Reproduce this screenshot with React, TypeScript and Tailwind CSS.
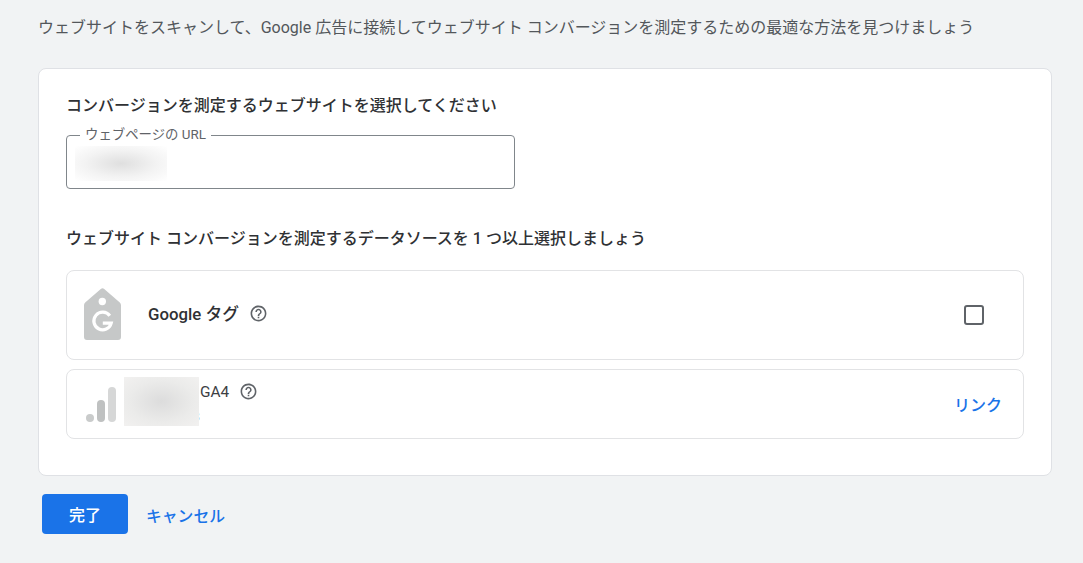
const FONT = "font-['Roboto','Noto_Sans_CJK_JP',sans-serif]";

function HelpIcon() {
  return (
    <svg className="w-[19px] h-[19px] text-[#5f6368]" viewBox="0 0 24 24" fill="currentColor">
      <path d="M11 18h2v-2h-2v2zm1-16C6.48 2 2 6.48 2 12s4.48 10 10 10 10-4.48 10-10S17.52 2 12 2zm0 18c-4.41 0-8-3.59-8-8s3.59-8 8-8 8 3.59 8 8-3.59 8-8 8zm0-14c-2.21 0-4 1.79-4 4h2c0-1.1.9-2 2-2s2 .9 2 2c0 2-3 1.75-3 5h2c0-2.25 3-2.5 3-5 0-2.21-1.79-4-4-4z" />
    </svg>
  );
}

function TagIcon() {
  return (
    <svg className="w-[37px] h-[52px]" viewBox="0 0 37 52">
      <path d="M16.8 1 a2.4 2.4 0 0 1 3.4 0 L35.8 14.6 a3.5 3.5 0 0 1 1.2 2.6 V49 a3 3 0 0 1 -3 3 H3 a3 3 0 0 1 -3 -3 V17.2 a3.5 3.5 0 0 1 1.2 -2.6 Z" fill="#c6c8c8" />
      <circle cx="18.3" cy="13.5" r="3.7" fill="#fff" />
      <path d="M25.8 27.8 A8.8 8.8 0 1 0 27.2 35.2 H18.8" fill="none" stroke="#fff" strokeWidth="3.2" />
    </svg>
  );
}

function BarsIcon() {
  return (
    <svg className="w-[30px] h-[35px]" viewBox="0 0 30 35">
      <circle cx="4" cy="31" r="4" fill="#c9cbcb" />
      <rect x="11" y="13" width="8" height="22" rx="4" fill="#bfc1c1" />
      <rect x="22" y="0" width="8" height="35" rx="4" fill="#d6d7d7" />
    </svg>
  );
}

export default function App() {
  return (
    <div className={`${FONT} w-[1083px] h-[563px] overflow-hidden bg-[#f1f3f4] pt-[18px] pl-[38px] pr-[31px]`}>
      <p className="text-[16px] leading-[20px] text-[#53575b] whitespace-nowrap">
        ウェブサイトをスキャンして、Google 広告に接続してウェブサイト コンバージョンを測定するための最適な方法を見つけましょう
      </p>

      <div className="mt-[30px] h-[408px] bg-white border border-[#dfe1e5] rounded-lg px-[27px] pt-[27px]">
        <h2 className="text-[16px] leading-[20px] font-medium text-[#2f3134]">
          コンバージョンを測定するウェブサイトを選択してください
        </h2>

        <fieldset className="mt-[12px] w-[449px] h-[61px] border border-[#80868b] rounded px-[13px]">
          <legend className="px-[5px] text-[13.4px] leading-[14px] text-[#5f6368]">ウェブページの URL</legend>
          <div className="w-[92px] h-[35px] -ml-[5px] mt-[4px] bg-[radial-gradient(ellipse_at_center,#dfdfdf_0%,#f3f3f3_55%,#ffffff_100%)]" />
        </fieldset>

        <h2 className="mt-[40px] text-[16px] leading-[20px] font-medium text-[#2f3134]">
          ウェブサイト コンバージョンを測定するデータソースを 1 つ以上選択しましょう
        </h2>

        <div className="mt-[21px] h-[90px] border border-[#e2e3e5] rounded-lg flex items-center pl-[17px] pr-[39px]">
          <span className="-mt-[3px] flex"><TagIcon /></span>
          <span className="ml-[27px] text-[16.8px] font-medium text-[#2f3134]">Google タグ</span>
          <span className="ml-[10px] -mt-[4px] flex"><HelpIcon /></span>
          <span className="ml-auto w-[20px] h-[20px] border-2 border-[#5f6368] rounded-[3px]" />
        </div>

        <div className="mt-[9px] h-[70px] border border-[#e2e3e5] rounded-lg flex items-center pl-[19px] pr-[21px]">
          <div className="flex"><BarsIcon /></div>
          <div className="relative z-10 ml-[8px] -mt-[6px] w-[75px] h-[49px] shrink-0 bg-[radial-gradient(ellipse_at_center,#dcdcdc_0%,#ebebea_60%,#f2f1f0_100%)]" />
          <div className="self-start mt-[12px]">
            <div className="flex items-center">
              <span className="ml-px text-[15.4px] leading-[20px] text-[#3c4043]">GA4</span>
              <span className="ml-[10px] -mt-[2px] flex"><HelpIcon /></span>
            </div>
            <div className="-ml-[6px] mt-[8px] text-[12px] leading-[14px] text-[#5f6368]">8</div>
          </div>
          <span className="ml-auto mt-[4px] text-[16px] font-medium text-[#1a73e8]">リンク</span>
        </div>
      </div>

      <div className="mt-[18px] ml-[4px] flex items-center">
        <button className="w-[86px] h-[40px] pt-[4px] bg-[#1a73e8] text-white text-[16px] font-medium rounded">完了</button>
        <button className="ml-[18px] pt-[5px] text-[15.8px] font-medium text-[#1a73e8]">キャンセル</button>
      </div>
    </div>
  );
}
